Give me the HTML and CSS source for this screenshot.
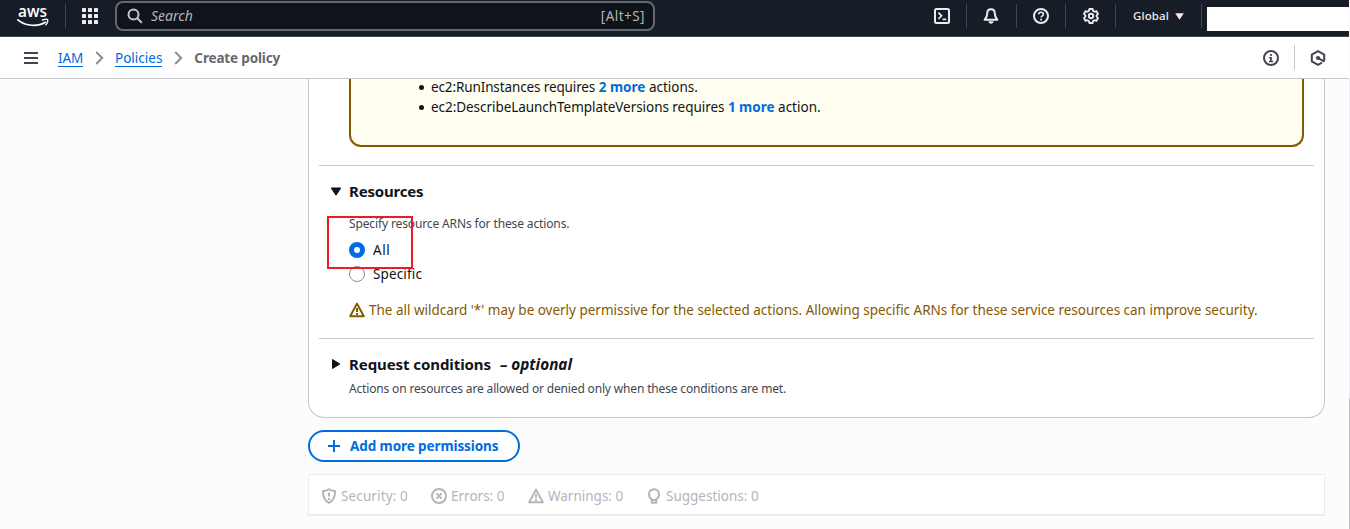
FILE: index.html
```html
<!DOCTYPE html>
<html lang="en">
<head>
<meta charset="utf-8">
<title>Create policy | IAM</title>
<link rel="stylesheet" href="styles.css">
</head>
<body>
<div class="app">
  <header class="topnav">
    <svg class="logo" width="34" height="24" viewBox="0 0 34 24">
      <text class="logo-text" x="1" y="11.8" textLength="29" lengthAdjust="spacingAndGlyphs">aws</text>
      <path d="M.8 14.800C9 21.600 21 21.800 28.200 17.200" fill="none" stroke="#fff" stroke-width="1.7" stroke-linecap="round"/>
      <path d="M25.400 15.100c2-.9 4.700-1 5.200-.4.5.7-.2 3.600-1.800 5" fill="none" stroke="#fff" stroke-width="1.4" stroke-linecap="round"/>
    </svg>
    <i class="rule rule-logo"></i>
    <svg class="apps" width="16" height="16" fill="#ebebf0">
      <rect width="4" height="4" rx=".6"/><rect x="6" width="4" height="4" rx=".6"/><rect x="12" width="4" height="4" rx=".6"/>
      <rect y="6" width="4" height="4" rx=".6"/><rect x="6" y="6" width="4" height="4" rx=".6"/><rect x="12" y="6" width="4" height="4" rx=".6"/>
      <rect y="12" width="4" height="4" rx=".6"/><rect x="6" y="12" width="4" height="4" rx=".6"/><rect x="12" y="12" width="4" height="4" rx=".6"/>
    </svg>
    <div class="search">
      <svg width="16" height="16" fill="none" stroke="#c6c6cd" stroke-width="2"><circle cx="6.5" cy="6.5" r="5"/><path d="M10.2 10.2l4.6 4.6"/></svg>
      <span class="search-hint">Search</span>
      <span class="search-key">[Alt+S]</span>
    </div>
    <div class="tools">
      <div class="tool">
        <svg width="16" height="16" fill="none" stroke="#ebebf0" stroke-width="2"><rect x="1" y="1" width="14" height="14" rx="1.5"/><path d="M4.4 4.6l3.2 3.2L4.4 11M8.6 11.4h3.6" stroke-width="1.7"/></svg>
      </div>
      <div class="tool tool-bell">
        <svg width="16" height="16" fill="none" stroke="#ebebf0" stroke-width="2" stroke-linejoin="round"><path d="M8 1.2C5.6 1.2 4.2 3 4.2 5.4 4.2 8.6 3 9.8 1.6 11.8h12.8C13 9.8 11.8 8.6 11.8 5.4 11.8 3 10.4 1.2 8 1.2z"/><path d="M5.4 13.2h5.2c-.2 1.600-1.200 2.500-2.600 2.500s-2.400-.9-2.600-2.500z" fill="#ebebf0" stroke="none"/></svg>
      </div>
      <div class="tool">
        <svg width="16" height="16" fill="none" stroke="#ebebf0" stroke-width="2"><circle cx="8" cy="8" r="7"/><path d="M5.600 6.400C5.700 4.900 6.700 4.200 8 4.200c1.400 0 2.400.8 2.400 2 0 1.600-2.300 1.700-2.300 3.400" stroke-width="1.600"/><path d="M8.100 10.700v1.700" stroke-width="1.800"/></svg>
      </div>
      <div class="tool">
        <svg width="16" height="16" fill="none" stroke="#ebebf0" stroke-width="1.900" stroke-linejoin="round"><path d="M6.400 1h3.200l.5 2 1.400.8 2-.6L15 5.900 13.600 7.300v1.400L15 10.100l-1.500 2.700-2-.6-1.400.8-.5 2H6.400l-.5-2-1.400-.8-2 .6L1 10.100l1.400-1.400V7.300L1 5.900l1.500-2.700 2 .6L5.900 3z"/><circle cx="8" cy="8" r="2.200"/></svg>
      </div>
      <div class="region">Global<svg width="9" height="7"><path d="M.2.300h8.600L4.500 6.700z" fill="#ebebf0"/></svg></div>
    </div>
    <div class="account"></div>
  </header>

  <nav class="crumbs">
    <svg class="menu" width="14" height="12" fill="#424650"><path d="M0 0h14v2H0zM0 5h14v2H0zM0 10h14v2H0z"/></svg>
    <a class="crumb crumb-iam">IAM</a>
    <svg class="chev" width="9" height="14" fill="none" stroke="#8c8c94" stroke-width="2"><path d="M1.200 1l6 6-6 6"/></svg>
    <a class="crumb">Policies</a>
    <svg class="chev" width="9" height="14" fill="none" stroke="#8c8c94" stroke-width="2"><path d="M1.200 1l6 6-6 6"/></svg>
    <span class="crumb-current">Create policy</span>
    <div class="panel-tools">
      <svg width="16" height="16" fill="none" stroke="#424650" stroke-width="2"><circle cx="8" cy="8" r="7"/><path d="M8 4v2M6.300 7.900H8v3.200M6 11.500h4.200" stroke-width="1.700"/></svg>
      <i class="panel-rule"></i>
      <svg width="16" height="16" fill="none" stroke="#424650" stroke-width="2"><path d="M14.200 11V4.600L8 1.200 1.800 4.600v6.800L8 14.800l4-2.200"/><circle cx="8" cy="8" r="2.100" fill="#424650" stroke="none"/><path d="M8.500 8.300l6 3.300"/></svg>
    </div>
  </nav>

  <div class="view">
    <main class="content">
      <section class="card">
        <div class="alert">
          <ul class="alert-list">
            <li><i class="bullet"></i><span class="req-run">ec2:RunInstances requires</span> <a class="more">2 more</a> actions.</li>
            <li><i class="bullet"></i><span class="req-desc">ec2:DescribeLaunchTemplateVersions requires</span> <a class="more">1 more</a> action.</li>
          </ul>
        </div>
        <div class="block resources">
          <svg class="caret" width="12" height="10"><path d="M1.200 1h9.600L6 8.200z" fill="#0f141a" stroke="#0f141a" stroke-linejoin="round"/></svg>
          <div class="block-body">
            <h3 class="title title-res">Resources</h3>
            <p class="hint hint-res">Specify resource ARNs for these actions.</p>
            <div class="radio radio-all"><i class="dot on"></i><span class="lbl-all">All</span></div>
            <div class="radio"><i class="dot"></i><span>Specific</span></div>
            <p class="warning"><svg width="16" height="16" fill="none" stroke="#855900" stroke-width="2" stroke-linejoin="round"><path d="M8 1.600L1.200 14.200h13.600z"/><path d="M8 6v4M8 11v2"/></svg><span>The all wildcard '*' may be overly permissive for the selected actions. Allowing specific ARNs for these service resources can improve security.</span></p>
            <div class="mark"></div>
          </div>
        </div>
        <div class="block conditions">
          <svg class="caret" width="12" height="12"><path d="M2.500 1.500v9L9.800 6z" fill="#0f141a" stroke="#0f141a" stroke-linejoin="round"/></svg>
          <div class="block-body">
            <h3 class="title"><span class="title-req">Request conditions</span><em>– optional</em></h3>
            <p class="hint hint-req">Actions on resources are allowed or denied only when these conditions are met.</p>
          </div>
        </div>
      </section>

      <button class="add"><svg width="12" height="12" stroke="#006ce0" stroke-width="2"><path d="M6 0v12M0 6h12"/></svg>Add more permissions</button>

      <div class="findings">
        <div class="finding sec"><svg width="16" height="16" fill="none" stroke="#b4b4bb" stroke-width="2" stroke-linejoin="round"><path d="M8 1.200C6 2.600 4 3 2 3c-.2 5.500 1.500 9.800 6 11.900C12.500 12.800 14.200 8.500 14 3c-2 0-4-.4-6-1.800z"/><path d="M8 4.500v4M8 10v2"/></svg><span>Security: 0</span></div>
        <div class="finding err"><svg width="16" height="16" fill="none" stroke="#b4b4bb" stroke-width="2"><circle cx="8" cy="8" r="7"/><path d="M5.400 5.400l5.200 5.200M10.600 5.400l-5.200 5.200"/></svg><span>Errors: 0</span></div>
        <div class="finding warn"><svg width="16" height="16" fill="none" stroke="#b4b4bb" stroke-width="2" stroke-linejoin="round"><path d="M8 1.600L1.200 14.200h13.600z"/><path d="M8 6v4M8 11v2"/></svg><span>Warnings: 0</span></div>
        <div class="finding sug"><svg width="16" height="16" fill="none" stroke="#b4b4bb" stroke-width="2" stroke-linejoin="round"><path d="M5.700 14.800v-3.600C4 10 3 8.300 3 6.200 3 3.200 5.200 1.200 8 1.200s5 2 5 5c0 2.100-1 3.800-2.700 5v3.600zM5.700 12h4.600"/></svg><span>Suggestions: 0</span></div>
      </div>
    </main>
    <div class="scroll"><div class="thumb"></div></div>
  </div>
</div>
</body>
</html>
```
FILE: styles.css
```css
* { box-sizing: border-box; }
body {
  margin: 0;
  font: 13.5px/20px "Noto Sans", "Open Sans", sans-serif;
  color: #0f141a;
  background: #fcfcfd;
}
svg { display: block; flex: none; }
h3, p, ul { margin: 0; padding: 0; }
.app { height: 529px; display: flex; flex-direction: column; overflow: hidden; }

.topnav {
  flex: none;
  height: 37px;
  width: 1349px;
  display: flex;
  align-items: flex-start;
  background: #161d26;
  border-bottom: 1px solid #424650;
}
.logo { margin: 5px 0 0 17px; overflow: visible; }
.logo-text { font: 600 17px/20px "Open Sans", sans-serif; fill: #fff; }
.rule { width: 1px; height: 24px; background: #424650; }
.rule-logo { margin: 4px 0 0 14px; }
.apps { margin: 8px 0 0 16px; }
.search {
  width: 540px;
  height: 30px;
  margin: 1px 0 0 17px;
  padding: 0 8px 0 10px;
  display: flex;
  align-items: center;
  border: 2px solid #656871;
  border-radius: 8px;
  background: #0f141a;
  color: #b4b4bb;
}
.search-hint { margin-left: 8px; font-size: 14px; font-style: italic; }
.search-key { margin-left: auto; letter-spacing: .45px; }
.tools { margin-left: auto; display: flex; padding-top: 4px; }
.tool {
  width: 50px;
  height: 24px;
  display: flex;
  justify-content: center;
  align-items: center;
  border-right: 1px solid #424650;
}
.tool:nth-child(3) { width: 49px; }
.tool-bell { padding-right: 1px; }
.region {
  width: 86px;
  height: 24px;
  display: flex;
  align-items: center;
  padding-left: 17px;
  gap: 6px;
  border-right: 1px solid #424650;
  color: #ebebf0;
  font-size: 11.5px;
  font-weight: 500;
  letter-spacing: .1px;
}
.account { width: 142px; height: 24px; margin: 7px 0 0 5px; background: #fff; }

.crumbs {
  flex: none;
  width: 1349px;
  height: 42px;
  display: flex;
  align-items: center;
  padding: 0 23px 0 24px;
  background: #fff;
  border-bottom: 1px solid #c6c6cd;
}
.menu { margin-right: 20px; }
.crumb { color: #006ce0; height: 18px; line-height: 18px; border-bottom: 1px solid #006ce0; }
.crumb-iam { letter-spacing: -.15px; }
.chev { margin: 0 11px 0 12px; }
.crumb-current { font-weight: 700; color: #656871; letter-spacing: -.15px; }
.panel-tools { margin-left: auto; display: flex; align-items: center; gap: 15px; }
.panel-rule { width: 1px; height: 25px; background: #c6c6cd; }

.view { flex: 1; min-height: 0; display: flex; }
.content { flex: 1; padding-left: 308px; padding-right: 24px; }
.scroll { flex: none; width: 1px; background: #ebebf0; padding-top: 319px; }
.thumb { height: 131px; background: #c6c6cd; }

.card {
  height: 339px;
  background: #fff;
  border: 1px solid #c6c6cd;
  border-top: 0;
  border-radius: 0 0 16px 16px;
  padding: 0 10px;
}
.alert {
  display: flow-root;
  height: 68px;
  margin: 0 10px 0 30px;
  background: #fffef0;
  border: 2px solid #855900;
  border-top: 0;
  border-radius: 0 0 12px 12px;
}
.alert-list { list-style: none; margin-top: -2px; padding-left: 68px; }
.alert-list li { height: 20px; white-space: nowrap; }
.bullet { display: inline-block; vertical-align: 2px; width: 5px; height: 5px; margin-right: 7px; border-radius: 50%; background: #0f141a; }
.req-run { letter-spacing: -.12px; }
.req-desc { letter-spacing: -.05px; }
.more { color: #006ce0; font-weight: 700; }
.block { display: flex; border-top: 1px solid #c6c6cd; padding-left: 11px; }
.resources { margin-top: 18px; height: 173px; }
.caret { margin-top: 21px; }
.block-body { position: relative; margin-left: 7px; padding-top: 15px; }
.title { font-size: 15px; line-height: 20px; font-weight: 700; white-space: nowrap; }
.title-res { letter-spacing: -.2px; }
.title-req { letter-spacing: -.08px; }
.title em { margin-left: 9px; font-size: 15.3px; }
.hint { font-size: 12px; line-height: 16px; color: #424650; letter-spacing: -.13px; }
.hint-res { margin-top: 15px; }
.hint-req { margin-top: 7px; letter-spacing: -.16px; }
.radio { display: flex; align-items: center; height: 20px; margin-top: 4px; gap: 8px; letter-spacing: .14px; }
.radio-all { margin-top: 8px; }
.lbl-all { letter-spacing: .6px; }
.dot { width: 16px; height: 16px; border: 1px solid #8c8c94; border-radius: 50%; background: #fff; }
.dot.on { border: 5px solid #006ce0; }
.warning { display: flex; align-items: center; gap: 4px; margin-top: 16px; color: #855900; white-space: nowrap; letter-spacing: -.014px; }
.mark { position: absolute; left: -22px; top: 50px; width: 86px; height: 53px; border: 2px solid #ec1c24; }
.conditions .caret { margin-top: 19px; }

.add {
  display: flex;
  align-items: center;
  width: 212px;
  height: 32px;
  margin: 12px 0;
  padding: 0 0 0 18px;
  gap: 10px;
  border: 2px solid #006ce0;
  border-radius: 16px;
  background: #fff;
  color: #006ce0;
  font: 700 13.5px/20px "Noto Sans", "Open Sans", sans-serif;
  letter-spacing: -.09px;
  white-space: nowrap;
}
.findings {
  height: 42px;
  display: flex;
  align-items: center;
  padding: 2px 0 0 12px;
  background: #fff;
  border: 1px solid #ebebf0;
  border-bottom-width: 2px;
  color: #b4b4bb;
}
.finding { display: flex; align-items: center; gap: 4px; white-space: nowrap; }
.sec { width: 110px; letter-spacing: .13px; }
.err { width: 97px; }
.warn { width: 118px; }
```
